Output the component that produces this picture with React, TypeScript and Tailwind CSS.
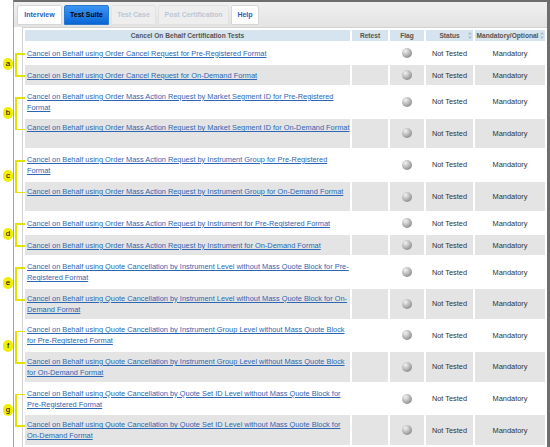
import React from "react";

type Row = { lines: string[] };

const rows: Row[] = [
  { lines: ["Cancel on Behalf using Order Cancel Request for Pre-Registered Format "] },
  { lines: ["Cancel on Behalf using Order Cancel Request for On-Demand Format "] },
  { lines: ["Cancel on Behalf using Order Mass Action Request by Market Segment ID for Pre-Registered", "Format "] },
  { lines: ["Cancel on Behalf using Order Mass Action Request by Market Segment ID for On-Demand Format", ""] },
  { lines: ["Cancel on Behalf using Order Mass Action Request by Instrument Group for Pre-Registered", "Format "] },
  { lines: ["Cancel on Behalf using Order Mass Action Request by Instrument Group for On-Demand Format", ""] },
  { lines: ["Cancel on Behalf using Order Mass Action Request by Instrument for Pre-Registered Format "] },
  { lines: ["Cancel on Behalf using Order Mass Action Request by Instrument for On-Demand Format "] },
  { lines: ["Cancel on Behalf using Quote Cancellation by Instrument Level without Mass Quote Block for Pre-", "Registered Format "] },
  { lines: ["Cancel on Behalf using Quote Cancellation by Instrument Level without Mass Quote Block for On-", "Demand Format "] },
  { lines: ["Cancel on Behalf using Quote Cancellation by Instrument Group Level without Mass Quote Block", "for Pre-Registered Format "] },
  { lines: ["Cancel on Behalf using Quote Cancellation by Instrument Group Level without Mass Quote Block", "for On-Demand Format "] },
  { lines: ["Cancel on Behalf using Quote Cancellation by Quote Set ID Level without Mass Quote Block for", "Pre-Registered Format "] },
  { lines: ["Cancel on Behalf using Quote Cancellation by Quote Set ID Level without Mass Quote Block for", "On-Demand Format "] },
];

const labels = ["a", "b", "c", "d", "e", "f", "g"];

const rowHeight = (r: Row) => (r.lines.length > 1 ? 29.6 : 20);

// y of each row's top edge, in page pixels
const rowTops: number[] = [];
{
  let y = 43;
  for (const r of rows) {
    rowTops.push(y);
    y += rowHeight(r) + 2;
  }
}

const SortIcon = () => (
  <svg width="4" height="7" viewBox="0 0 4 7" className="absolute right-[1px] top-[2px]">
    <path d="M2 0 L4 2.6 H0 Z" fill="#b4bcc6" />
    <path d="M2 7 L4 4.4 H0 Z" fill="#b4bcc6" />
  </svg>
);

const Flag = () => (
  <span className="inline-block w-[10px] h-[10px] rounded-full bg-[radial-gradient(circle_at_35%_30%,#f2f2f2_0%,#b8b8b8_45%,#6e6e6e_100%)]" />
);

const Tab = ({ label, kind, w }: { label: string; kind: "on" | "link" | "off"; w: string }) => {
  const styles = {
    on: "bg-gradient-to-b from-[#3a95f2] to-[#0766d6] text-black border-[#2a78d0]",
    link: "bg-white text-[#1f5fbf] border-[#d6d6d6]",
    off: "bg-[#eeeeee] text-[#b9c7d6] border-[#e2e2e2]",
  }[kind];
  return (
    <div className={`${w} h-[20px] flex items-center justify-center border rounded-t-[2px] text-[7px] font-bold ${styles}`}>
      {label}
    </div>
  );
};

export default function App() {
  return (
    <div className="relative w-[550px] h-[447px] overflow-hidden bg-white font-['Liberation_Sans',Arial,sans-serif]">
      <div className="ml-[13px] h-full flex flex-col border-l border-l-[#a3a3a3] border-t-2 border-t-[#6e6e6e] border-r-[3px] border-r-[#6e6e6e]">
        <div className="h-[25px] shrink-0 flex gap-[2px] pl-[3px] pt-[3px] bg-gradient-to-b from-[#f1f1f1] to-[#e3e3e3]">
          <Tab label="Interview" kind="link" w="w-[45px]" />
          <Tab label="Test Suite" kind="on" w="w-[45px]" />
          <Tab label="Test Case" kind="off" w="w-[45px]" />
          <Tab label="Post Certification" kind="off" w="w-[71px]" />
          <Tab label="Help" kind="link" w="w-[28px]" />
        </div>
        <div className="flex-1 ml-[8px] border-l border-t border-[#d2d2d2] bg-white">
          <table className="border-separate border-spacing-[2px] table-fixed w-[524px] text-[7.4px] leading-[11px]">
            <colgroup>
              <col className="w-[325px]" />
              <col className="w-[36px]" />
              <col className="w-[34px]" />
              <col className="w-[47px]" />
              <col className="w-[70px]" />
            </colgroup>
            <thead>
              <tr className="h-[11px] bg-[#d5e4ef] text-[#555] font-bold text-[6.6px]">
                <th className="p-0 text-center">Cancel On Behalf Certification Tests</th>
                <th className="p-0 text-center">Retest</th>
                <th className="p-0 text-center">Flag</th>
                <th className="p-0 text-center relative">
                  Status
                  <SortIcon />
                </th>
                <th className="p-0 pr-[5px] text-center relative whitespace-nowrap">
                  Mandatory/Optional
                  <SortIcon />
                </th>
              </tr>
            </thead>
            <tbody>
              {rows.map((r, i) => (
                <tr
                  key={i}
                  className={i % 2 === 1 ? "bg-[#e4e4e4]" : "bg-white"}
                  style={{ height: rowHeight(r) }}
                >
                  <td className="p-0 pl-[2px] align-middle whitespace-nowrap">
                    <a className="text-[#2d66b3] underline underline-offset-[1px]" href="#">
                      {r.lines[0]}
                    </a>
                    {r.lines.length > 1 && (
                      <>
                        <br />
                        {r.lines[1] ? (
                          <a className="text-[#2d66b3] underline underline-offset-[1px]" href="#">
                            {r.lines[1]}
                          </a>
                        ) : (
                          "\u00a0"
                        )}
                      </>
                    )}
                  </td>
                  <td className="p-0" />
                  <td className="p-0 text-center align-middle">
                    <div className="flex items-center justify-center">
                      <Flag />
                    </div>
                  </td>
                  <td className="p-0 text-center align-middle text-[#333]">Not Tested</td>
                  <td className="p-0 text-center align-middle text-[#333]">Mandatory</td>
                </tr>
              ))}
            </tbody>
          </table>
        </div>
      </div>

      {/* yellow call-out brackets */}
      {labels.map((lab, k) => {
        const y1 = rowTops[2 * k] + 10;
        const y2 = rowTops[2 * k + 1] + 10;
        const mid = (y1 + y2) / 2;
        return (
          <React.Fragment key={lab}>
            <div
              className="absolute left-[15px] w-[1.5px] bg-[#e2e200]"
              style={{ top: y1, height: y2 - y1 + 1 }}
            />
            <div className="absolute left-[15px] w-[10px] h-[1.5px] bg-[#e2e200]" style={{ top: y1 }} />
            <div className="absolute left-[15px] w-[10px] h-[1.5px] bg-[#e2e200]" style={{ top: y2 }} />
            <div
              className="absolute left-[3px] w-[10px] h-[12px] rounded-full bg-[#eef000] flex items-center justify-center text-[8px] leading-none text-black"
              style={{ top: mid - 6 }}
            >
              {lab}
            </div>
          </React.Fragment>
        );
      })}
    </div>
  );
}
